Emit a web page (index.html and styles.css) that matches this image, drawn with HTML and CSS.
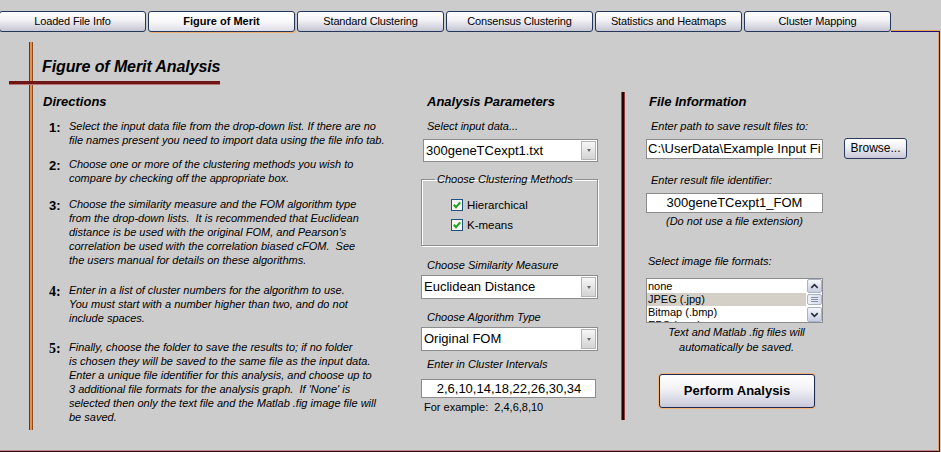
FILE: index.html
```html
<!DOCTYPE html>
<html>
<head>
<meta charset="utf-8">
<title>Figure of Merit</title>
<link rel="stylesheet" href="styles.css">
</head>
<body>
<div class="app">
  <nav class="tabbar">
    <div class="tab">Loaded File Info</div>
    <div class="tab active">Figure of Merit</div>
    <div class="tab">Standard Clustering</div>
    <div class="tab">Consensus Clustering</div>
    <div class="tab">Statistics and Heatmaps</div>
    <div class="tab">Cluster Mapping</div>
    <div class="tab-fill"></div>
  </nav>
  <main class="panel">
    <section class="left">
      <div class="vbar-orange"></div>
      <div class="left-content">
        <h1 class="title">Figure of Merit Analysis</h1>
        <h2 class="sec-head">Directions</h2>
        <ol class="steps">
          <li class="step s1"><span class="num">1:</span><p>Select the input data file from the drop-down list. If there are no<br>file names present you need to import data using the file info tab.</p></li>
          <li class="step s2"><span class="num">2:</span><p>Choose one or more of the clustering methods you wish to<br>compare by checking off the appropriate box.</p></li>
          <li class="step s3"><span class="num">3:</span><p>Choose the similarity measure and the FOM algorithm type<br>from the drop-down lists.&nbsp; It is recommended that Euclidean<br>distance is be used with the original FOM, and Pearson's<br>correlation be used with the correlation biased cFOM.&nbsp; See<br>the users manual for details on these algorithms.</p></li>
          <li class="step s4"><span class="num serif">4:</span><p>Enter in a list of cluster numbers for the algorithm to use.<br>You must start with a number higher than two, and do not<br>include spaces.</p></li>
          <li class="step s5"><span class="num serif">5:</span><p>Finally, choose the folder to save the results to; if no folder<br>is chosen they will be saved to the same file as the input data.<br>Enter a unique file identifier for this analysis, and choose up to<br>3 additional file formats for the analysis graph.&nbsp; If 'None' is<br>selected then only the text file and the Matlab .fig image file will<br>be saved.</p></li>
        </ol>
      </div>
    </section>

    <section class="mid">
      <h2 class="sec-head">Analysis Parameters</h2>
      <div class="label gap-a">Select input data...</div>
      <div class="combo combo-input">
        <div class="combo-text">300geneTCexpt1.txt</div>
        <div class="combo-btn"></div>
      </div>
      <fieldset class="group">
        <legend>Choose Clustering Methods</legend>
        <div class="checks">
          <div class="check">
            <svg class="cb" width="12" height="12" viewBox="0 0 12 12"><rect x="0.5" y="0.5" width="11" height="11" fill="#f4f4f0" stroke="#1c5180"/><path d="M2.8 5.8 L5 8.2 L9.2 3.4" fill="none" stroke="#21a121" stroke-width="2"/></svg>
            <span>Hierarchical</span>
          </div>
          <div class="check">
            <svg class="cb" width="12" height="12" viewBox="0 0 12 12"><rect x="0.5" y="0.5" width="11" height="11" fill="#f4f4f0" stroke="#1c5180"/><path d="M2.8 5.8 L5 8.2 L9.2 3.4" fill="none" stroke="#21a121" stroke-width="2"/></svg>
            <span>K-means</span>
          </div>
        </div>
      </fieldset>
      <div class="label gap-b">Choose Similarity Measure</div>
      <div class="combo combo-wide">
        <div class="combo-text">Euclidean Distance</div>
        <div class="combo-btn"></div>
      </div>
      <div class="label gap-c">Choose Algorithm Type</div>
      <div class="combo combo-wide">
        <div class="combo-text">Original FOM</div>
        <div class="combo-btn"></div>
      </div>
      <div class="label gap-d">Enter in Cluster Intervals</div>
      <div class="field field-intervals">2,6,10,14,18,22,26,30,34</div>
      <div class="example">For example:&nbsp; 2,4,6,8,10</div>
    </section>

    <section class="right">
      <div class="vbar-dark"></div>
      <div class="right-content">
        <h2 class="sec-head">File Information</h2>
        <div class="label gap-a">Enter path to save result files to:</div>
        <div class="path-row">
          <div class="field">C:\UserData\Example Input Fi</div>
          <div class="btn">Browse...</div>
        </div>
        <div class="label gap-e">Enter result file identifier:</div>
        <div class="field field-center gap-f">300geneTCexpt1_FOM</div>
        <div class="note">(Do not use a file extension)</div>
        <div class="label label-formats">Select image file formats:</div>
        <div class="listbox">
          <div class="list-items">
            <div class="item">none</div>
            <div class="item selected">JPEG (.jpg)</div>
            <div class="item">Bitmap (.bmp)</div>
            <div class="item item-cut">EPS (.eps)</div>
          </div>
          <div class="scrollbar">
            <div class="sb-btn"><svg width="14" height="12" viewBox="0 0 14 12"><path d="M3.5 7.5 L7 4 L10.5 7.5" fill="none" stroke="#2a2a3a" stroke-width="1.7"/></svg></div>
            <div class="sb-thumb"><span></span><span></span><span></span></div>
            <div class="sb-btn sb-down"><svg width="14" height="12" viewBox="0 0 14 12"><path d="M3.5 4.5 L7 8 L10.5 4.5" fill="none" stroke="#2a2a3a" stroke-width="1.7"/></svg></div>
          </div>
        </div>
        <p class="auto-note">Text and Matlab .fig files will<br>automatically be saved.</p>
        <div class="perform">Perform Analysis</div>
      </div>
    </section>
  </main>
</div>
</body>
</html>
```
FILE: styles.css
```css
* { box-sizing: border-box; }
html, body { margin: 0; padding: 0; }
body {
  width: 941px;
  height: 452px;
  overflow: hidden;
  background: #cccccc;
  font-family: "Liberation Sans", Arial, sans-serif;
  color: #000;
}
.app { display: flex; flex-direction: column; height: 452px; }

/* tabs */
.tabbar {
  display: flex;
  gap: 2px;
  padding-top: 11px;
  margin-left: -1px;
  margin-right: 1px;
  height: 32px;
  flex: none;
}
.tab {
  width: 147px;
  height: 21px;
  flex: none;
  border: 1px solid #24365a;
  border-radius: 3px;
  background: linear-gradient(#ffffff 0%, #f3f3f7 40%, #c6c6d4 100%);
  font-size: 11px;
  line-height: 19px;
  text-align: center;
  letter-spacing: -0.15px;
  white-space: nowrap;
}
.tab.active {
  font-weight: bold;
  letter-spacing: 0;
  background: linear-gradient(#ffffff 0%, #f8f8fb 50%, #dedee8 100%);
  box-shadow: 1px 1px 0 #f0b070;
}
.tab-fill {
  flex: 1;
  align-self: flex-end;
  height: 2px;
  margin-left: -2px;
  border-top: 1px solid #e8a060;
  border-bottom: 1px solid #1c1470;
}

/* panel */
.panel {
  flex: 1;
  margin-right: 1px;
  border-right: 1px solid #1c1470;
  border-bottom: 1px solid #3a0810;
  box-shadow: inset -1px 0 0 #e8a060, inset 0 -1px 0 #c48a8a;
  display: flex;
  align-items: flex-start;
}

.sec-head {
  margin: 0;
  font: italic bold 13px/16px "Liberation Sans", Arial, sans-serif;
}
.label {
  font: italic 11px/14px "Liberation Sans", Arial, sans-serif;
  padding-left: 6px;
  white-space: nowrap;
}

/* left column */
.left {
  width: 421px;
  flex: none;
  padding: 10px 0 0 29px;
  display: flex;
}
.vbar-orange {
  width: 4px;
  height: 388px;
  flex: none;
  background: linear-gradient(90deg, #6e3416 0 1px, #e2924e 1px 3px, #8a4a22 3px);
}
.left-content { flex: 1; padding-left: 10px; }
.title {
  margin: 15px 0 0 -34px;
  width: 211px;
  padding: 0 0 4px 33px;
  font: italic bold 16px/20px "Liberation Sans", Arial, sans-serif;
  letter-spacing: -0.1px;
  border-bottom: 3px solid #6e1616;
  box-shadow: 0 1px 0 #b87070;
  white-space: nowrap;
}
.left-content .sec-head { margin-top: 10px; }
.steps { list-style: none; margin: 0; padding: 0; }
.step { display: flex; }
.num {
  width: 26px;
  flex: none;
  padding: 2px 0 0 6px;
  font: bold 13px/14px "Liberation Sans", Arial, sans-serif;
}
.num.serif { font-family: "Liberation Serif", "Times New Roman", serif; font-size: 14px; }
.step p {
  margin: 0;
  font: italic 11px/14px "Liberation Sans", Arial, sans-serif;
  white-space: nowrap;
}
.s1 { margin-top: 9px; }
.s2 { margin-top: 9.5px; }
.s3 { margin-top: 12px; }
.s4 { margin-top: 16px; }
.s5 { margin-top: 15.5px; }

/* middle column */
.mid { width: 177px; flex: none; padding-top: 62px; }
.mid .sec-head { padding-left: 6px; }
.gap-a { margin-top: 9px; }
.combo {
  display: flex;
  background: #fff;
  border: 1px solid #8c8c8c;
}
.combo-input { width: 175px; height: 23px; margin: 6px 0 0 2px; }
.combo-wide { width: 177px; height: 24px; margin-top: 3px; }
.combo-text {
  flex: 1;
  font-size: 13px;
  line-height: 21px;
  padding-left: 2px;
  white-space: nowrap;
  overflow: hidden;
}
.combo-btn {
  width: 15px;
  flex: none;
  margin: 1px;
  background: linear-gradient(#f6f6f6, #d4d4d4);
  border: 1px solid #b4b4b4;
  display: flex;
  align-items: center;
  justify-content: center;
}
.combo-btn::after {
  content: "";
  border-left: 2.5px solid transparent;
  border-right: 2.5px solid transparent;
  border-top: 3px solid #6a6a6a;
}
.group {
  margin: 10px 0 0;
  padding: 0;
  width: 177px;
  min-inline-size: 0;
  border: 1px solid #8e8e8e;
  box-shadow: inset 1px 1px 0 #ffffff, 1px 1px 0 #ffffff;
}
.group legend {
  margin-left: 13px;
  padding: 0 2px;
  font: italic 11px/14px "Liberation Sans", Arial, sans-serif;
}
.checks { padding: 9px 0 10px 29px; }
.check {
  display: flex;
  align-items: center;
  gap: 4px;
  height: 20px;
  font-size: 11.5px;
}
.cb { flex: none; }
.gap-b { margin-top: 12px; }
.gap-c { margin-top: 11px; }
.gap-d { margin-top: 6px; }
.field {
  width: 177px;
  height: 20px;
  background: #fff;
  border: 1px solid #8c8c8c;
  font-size: 13px;
  line-height: 18px;
  white-space: nowrap;
  overflow: hidden;
  padding-left: 1px;
}
.field-intervals {
  width: 175px;
  height: 19px;
  line-height: 17px;
  margin-top: 8px;
  text-align: center;
}
.example {
  font: 11px/13px "Liberation Sans", Arial, sans-serif;
  padding-left: 3px;
  margin-top: 3px;
}

/* right column */
.right {
  flex: none;
  margin-left: 23px;
  padding-top: 60px;
  display: flex;
}
.vbar-dark {
  width: 4px;
  height: 328px;
  flex: none;
  background: linear-gradient(90deg, #a04a4a 0 1px, #2a0404 1px 3px, #8a3a3a 3px);
}
.right-content { width: 300px; padding: 2px 0 0 21px; }
.right-content .sec-head { padding-left: 3px; }
.right-content .label { padding-left: 5px; }
.path-row { display: flex; gap: 21px; margin-top: 6px; }
.btn {
  width: 63px;
  height: 21px;
  margin-top: -1px;
  flex: none;
  border: 1px solid #2a3a5c;
  border-radius: 3px;
  background: linear-gradient(#ffffff 0%, #f2f2f6 40%, #c8c8d8 100%);
  font-size: 12px;
  line-height: 19px;
  text-align: center;
}
.gap-e { margin-top: 14px; }
.gap-f { margin-top: 6px; }
.field-center { text-align: center; padding-left: 0; }
.note {
  width: 177px;
  text-align: center;
  font: italic 11px/14px "Liberation Sans", Arial, sans-serif;
  margin-top: 1px;
}
.right-content .label-formats { margin-top: 26px; padding-left: 2px; }
.listbox {
  display: flex;
  width: 177px;
  height: 45px;
  margin-top: 10px;
  background: #fff;
  border: 1px solid #8c8c8c;
}
.list-items { flex: 1; overflow: hidden; padding-top: 1px; }
.item {
  font-size: 11px;
  line-height: 13px;
  height: 13px;
  padding-left: 1px;
  white-space: nowrap;
}
.item-cut { height: 3px; overflow: hidden; }
.item.selected { background: #d4d0c8; }
.scrollbar {
  width: 16px;
  flex: none;
  display: flex;
  flex-direction: column;
  gap: 1px;
  padding: 0 0 0 1px;
}
.sb-btn {
  height: 14px;
  border: 1px solid #aab2c8;
  border-radius: 2px;
  background: linear-gradient(#f4f6fb, #c9cee0);
  display: flex;
  align-items: center;
  justify-content: center;
}
.sb-btn svg { display: block; width: 13px; height: 11px; }
.sb-down { height: 15px; margin-top: auto; }
.sb-thumb {
  height: 11px;
  border: 1px solid #aab2c8;
  border-radius: 2px;
  background: linear-gradient(90deg, #eef0f8, #d8dcea);
  display: flex;
  flex-direction: column;
  align-items: center;
  justify-content: center;
  gap: 1px;
}
.sb-thumb span { width: 7px; height: 1px; background: #8890a8; }
.auto-note {
  width: 177px;
  margin: 2px 0 0;
  text-align: center;
  font: italic 11px/15px "Liberation Sans", Arial, sans-serif;
  padding-left: 4px;
}
.perform {
  width: 156px;
  height: 34px;
  margin: 19px 0 0 13px;
  border: 1px solid #1e2a50;
  border-radius: 3px;
  box-shadow: 0 0 0 1px #f4b47a;
  background: linear-gradient(#ffffff 0%, #f4f4f8 40%, #c8c8da 100%);
  font: bold 13px/32px "Liberation Sans", Arial, sans-serif;
  text-align: center;
}
```
